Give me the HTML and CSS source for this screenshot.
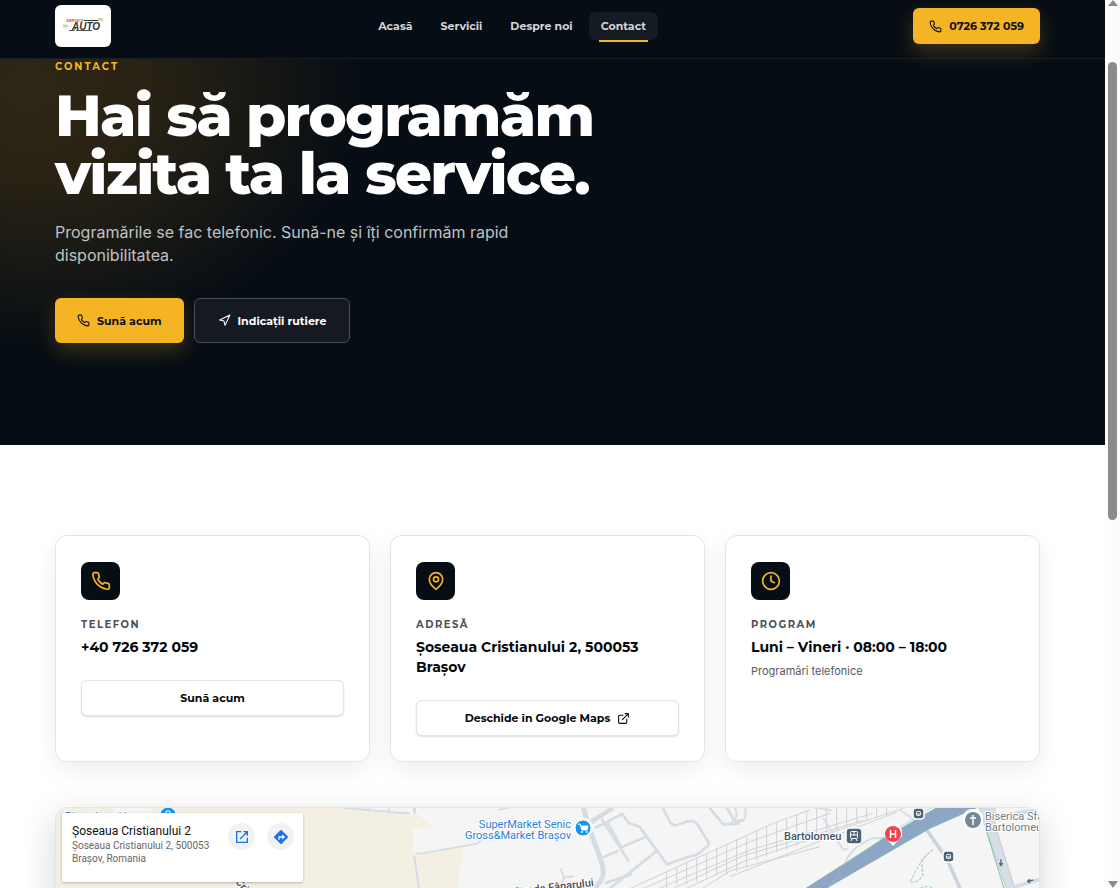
FILE: index.html
```html
<!DOCTYPE html>
<html lang="ro">
<head>
<meta charset="utf-8">
<meta name="viewport" content="width=device-width, initial-scale=1">
<title>Contact – Service Auto</title>
<link rel="stylesheet" href="styles.css">
</head>
<body>
<svg class="sprite" aria-hidden="true">
  <symbol id="phone" viewBox="0 0 24 24"><path d="M22 16.92v3a2 2 0 0 1-2.18 2 19.79 19.79 0 0 1-8.63-3.07 19.5 19.5 0 0 1-6-6 19.79 19.79 0 0 1-3.07-8.67A2 2 0 0 1 4.11 2h3a2 2 0 0 1 2 1.72 12.84 12.84 0 0 0 .7 2.81 2 2 0 0 1-.45 2.11L8.09 9.91a16 16 0 0 0 6 6l1.27-1.27a2 2 0 0 1 2.11-.45 12.84 12.84 0 0 0 2.81.7A2 2 0 0 1 22 16.92z"/></symbol>
  <symbol id="nav-arrow" viewBox="0 0 24 24"><path d="M3 11 22 2l-9 19-2-8z"/></symbol>
  <symbol id="pin" viewBox="0 0 24 24"><path d="M20 10c0 6-8 12-8 12s-8-6-8-12a8 8 0 0 1 16 0z"/><circle cx="12" cy="10" r="3"/></symbol>
  <symbol id="clock" viewBox="0 0 24 24"><circle cx="12" cy="12" r="10"/><path d="M12 6v6l4 2"/></symbol>
  <symbol id="external" viewBox="0 0 24 24"><path d="M15 3h6v6M10 14 21 3M18 13v6a2 2 0 0 1-2 2H5a2 2 0 0 1-2-2V8a2 2 0 0 1 2-2h6"/></symbol>
</svg>
<div class="window">
  <div class="page">
    <header class="header">
      <a class="logo" href="#" aria-label="Service Auto">
        <svg viewBox="0 0 56 42" aria-hidden="true">
          <text x="11" y="17" class="logo-top">SERVICE</text>
          <path d="M29 15.500h14" stroke="#333" stroke-width="1"/>
          <text x="17" y="25" class="logo-name">AUTO</text>
          <path d="M14 25.500h5l2-3M21 25.500h16" stroke="#555" stroke-width="1" fill="none"/>
          <path d="M8 21h5M43 14.500h5" stroke="#c4dca4" stroke-width="3"/>
        </svg>
      </a>
      <nav class="nav">
        <a href="#">Acasă</a>
        <a href="#">Servicii</a>
        <a href="#">Despre noi</a>
        <a href="#" class="active" aria-current="page">Contact</a>
      </nav>
      <a class="btn primary compact" href="#"><svg class="icon"><use href="#phone"/></svg>0726 372 059</a>
    </header>
    <section class="hero">
      <p class="eyebrow">Contact</p>
      <h1>Hai să programăm vizita ta la service.</h1>
      <p class="lead">Programările se fac telefonic. Sună-ne și îți confirmăm rapid disponibilitatea.</p>
      <div class="actions">
        <a class="btn primary" href="#"><svg class="icon"><use href="#phone"/></svg>Sună acum</a>
        <a class="btn ghost" href="#"><svg class="icon"><use href="#nav-arrow"/></svg>Indicații rutiere</a>
      </div>
    </section>
    <main class="content">
      <div class="cards">
        <article class="card">
          <span class="badge"><svg class="icon"><use href="#phone"/></svg></span>
          <h2>Telefon</h2>
          <p class="value">+40 726 372 059</p>
          <a class="btn outline" href="#">Sună acum</a>
        </article>
        <article class="card">
          <span class="badge"><svg class="icon"><use href="#pin"/></svg></span>
          <h2>Adresă</h2>
          <p class="value">Șoseaua Cristianului 2, 500053 Brașov</p>
          <a class="btn outline" href="#">Deschide în Google Maps<svg class="icon"><use href="#external"/></svg></a>
        </article>
        <article class="card">
          <span class="badge"><svg class="icon"><use href="#clock"/></svg></span>
          <h2>Program</h2>
          <p class="value">Luni – Vineri · 08:00 – 18:00</p>
          <p class="note">Programări telefonice</p>
        </article>
      </div>
      <section class="map" aria-label="Hartă">
        <svg class="map-canvas" viewBox="0 0 983 400" preserveAspectRatio="xMinYMin slice">
          <rect width="983" height="400" fill="#f5f5f5"/>
          <path d="M0 0h358v400H0z" fill="#f4efe3"/>
          <path d="M57 0h38v8H57zM282 0h76v9l-20-5-56-4z" fill="#f5f5f6"/>
          <path d="M358 3 376 18l-18 3v24l50-7-7 42h-43z" fill="#f4efe3"/>
          <path d="M358 21v23" stroke="#f5f5f5" stroke-width="2"/>
          <path d="M358 21h18l34 15-52 8z" fill="#f5f5f5"/>
          <g transform="translate(-16 -13) scale(.3333)" fill="none" stroke="#d3dbe3" stroke-width="5">
            <path d="M905 38 1110 56M985 38v8M1047 38v12M1122 38v20M1140 175h-10M1123 185l14 95"/>
          </g>
          <g transform="translate(344 -13) scale(.3333)" fill="none" stroke="#d4dce4" stroke-width="8" stroke-linejoin="round">
            <path d="M0 54h30M45 38v18M295 45l30-7M55 177l178-31 10-10M43 185l14 95" stroke-width="5"/>
            <path d="M550 38q15 55 35 110 25 60 25 85 0 20-25 45" stroke-width="15"/>
            <path d="M640 38 560 90" stroke-width="14"/>
            <path d="M585 98 620 82M605 72l82 128M610 187l45-20M622 80l45-23 20 28 32 10 20 28 62 85 62-22q30-3 50-25 17-10 12-20l-30-48q-8-18-30-14l-42 13q-8-4-15-14l-30-62M622 80l42 77 78-33M768 170 630 280M615 265l82-28M928 38l42 50 50-2M980 38l25 42 25-5"/>
            <path d="M482 220l10 28-8 18M492 248l28-4" stroke-width="6"/>
          </g>
          <g transform="translate(674 -13) scale(.3333)" fill="none" stroke-linejoin="round">
            <path d="M-310 285 130 85 240 45M-270 285 60 140 300 55M-225 285 60 165 430 55M-180 285 40 182 400 76M-140 285 40 200 520 40M-90 285 0 228 270 155M0 245 240 150 500 52" stroke="#cfd1d4" stroke-width="3"/>
            <path d="M-190 230v50M-160 215v55M-130 202v65M-100 190v70M-70 175v75M-40 160v80M-10 148v90M20 135v95M50 120v95M80 108v90M110 95v90M140 82v90M170 70v95M200 58v92M230 48v90M260 42v80M290 40v72M320 40v64M350 40v54M380 38v46M410 38v40M440 38v32M470 38v22" stroke="#cfd1d4" stroke-width="3"/>
            <path d="M0 85q30-15 15-45M15 78q40 10 30-40" stroke="#d4dce4" stroke-width="6"/>
            <path d="M280 70l60 95 14-5M510 45l70 48M255 38l50 8M345 208q10-45 80-78h60" stroke="#d8dee6" stroke-width="6"/>
            <path d="M582 93 650 190 690 280" stroke="#cbd4dd" stroke-width="11"/>
            <path d="M220 285 470 125 620 38H740L600 100 280 285z" fill="#8ea6c5" stroke="#7daaa4" stroke-width="2"/>
            <path d="M340 211 490 108 605 38M294 280l36-45" stroke="#8bd1b4" stroke-width="2"/>
            <path d="M748 38l12 40 70 205h25L795 90V38z" fill="#d6dee7" stroke="#c1ccd5" stroke-width="3"/>
            <path d="M770 110 822 280" stroke="#74c8a3" stroke-width="3"/>
            <path d="M930 253l-75 22M855 55l75-10" stroke="#d4dce4" stroke-width="11"/>
            <path d="M610 163q-35 20-70 100l26-5 12-16-3-45 32-33M570 280q25-10 40 0" stroke="#8bcdb0" stroke-width="3" stroke-dasharray="9 5"/>
            <path d="M813 193v18m-5-7 5 8 5-8M910 255l-16 4m5-6-6 6 7 4" stroke="#59636b" stroke-width="4"/>
          </g>
          <g class="poi-blue">
            <text x="9" y="12">Piața Auto Harman</text>
            <text x="515" y="20" text-anchor="end">SuperMarket Senic</text>
            <text x="515" y="31" text-anchor="end">Gross&amp;Market Brașov</text>
          </g>
          <circle cx="112" cy="7" r="8" fill="#1297f6" stroke="#fff" stroke-width="1"/>
          <path d="M110 6V3h4v3M109 6h6v5h-6z" fill="none" stroke="#fff"/>
          <g stroke="#fff" stroke-width="1">
            <path d="M519 24q-2-13 8-14 11 1 9 14l-9 8z" fill="#fff"/><circle cx="527" cy="20" r="8" fill="#1297f6"/>
            <path d="M522 16h2l2 6h5l1-4h-7" fill="#fff"/><circle cx="526" cy="24" r=".7"/><circle cx="531" cy="24" r=".7"/>
          </g>
          <text x="538" y="78" class="road" text-anchor="end" transform="rotate(-7 538 78)">Strada Fânarului</text>
          <text x="179" y="74" class="road" transform="rotate(50 179 74)">Cristianului</text>
          <text x="728" y="32" class="station">Bartolomeu</text>
          <g fill="#4b6477" stroke="#fff" stroke-width="1.500">
            <rect x="790" y="20" width="16" height="16" rx="4"/>
            <rect x="857" y="0" width="11" height="11" rx="3"/><rect x="887" y="43" width="11" height="11" rx="3"/>
          </g>
          <g fill="none" stroke="#fff">
            <rect x="794.500" y="23.500" width="7" height="7" rx="1"/><path d="M794 27h8M798 24v3M795 33l1-2M801 33l-1-2"/>
            <rect x="860.500" y="3.500" width="4" height="4" rx="1"/><path d="M860 6h5"/>
            <rect x="890.500" y="46.500" width="4" height="4" rx="1"/><path d="M890 49h5"/>
          </g>
          <path d="M828 28q-1-12 9-13 10 1 9 13l-9 10z" fill="#fff"/><circle cx="837" cy="26" r="8" fill="#f5424f"/>
          <path d="M834.500 22v8M839.500 22v8M834.500 26h5" stroke="#fff" stroke-width="1.500"/>
          <path d="M907 14q-1-13 10-13t10 13l-10 10z" fill="#fff"/><circle cx="917" cy="12" r="8" fill="#748995"/>
          <path d="M917 7v10M914 10h6" stroke="#fff" stroke-width="1.500"/>
          <g class="church"><text x="929" y="12">Biserica Sfântul</text><text x="929" y="23">Bartolomeu</text></g>
        </svg>
        <div class="place">
          <div class="place-text">
            <strong>Șoseaua Cristianului 2</strong>
            <span>Șoseaua Cristianului 2, 500053 Brașov, Romania</span>
          </div>
          <a class="round" href="#" aria-label="Deschide harta"><svg viewBox="0 0 24 24"><path d="M11 4H4v16h16v-7M14 4h6v6M20 4 9 15" fill="none" stroke="#1a73e8" stroke-width="2"/></svg></a>
          <a class="round" href="#" aria-label="Indicații"><svg viewBox="0 0 24 24"><path d="M11 2q1-1 2 0l9 9q1 1 0 2l-9 9q-1 1-2 0l-9-9q-1-1 0-2z" fill="#1a73e8"/><path d="M9 16v-4h6" fill="none" stroke="#fff" stroke-width="2"/><path d="m14 8 4 4-4 4z" fill="#fff"/></svg></a>
        </div>
      </section>
    </main>
  </div>
  <div class="scrollbar" aria-hidden="true">
    <span class="arrow up"></span><span class="thumb"></span><span class="arrow down"></span>
  </div>
</div>
</body>
</html>
```
FILE: styles.css
```css
:root {
  --ink: #070d14;
  --amber: #f4b423;
  --line: #e1e5e9;
  --display: "Montserrat", "Inter", sans-serif;
}
* { box-sizing: border-box; }
body { margin: 0; background: #fff; color: #05080c; font-family: "Inter", sans-serif; }
h1, h2, p { margin: 0; }
a { color: inherit; text-decoration: none; }
.sprite { position: absolute; width: 0; height: 0; }
.icon { width: 13px; height: 13px; flex: none; fill: none; stroke: currentColor; stroke-width: 2; stroke-linecap: round; stroke-linejoin: round; }

.window { display: grid; grid-template-columns: minmax(0, 1fr) 15px; height: 100vh; overflow: hidden; }
.page { overflow: hidden; }
.scrollbar { display: flex; flex-direction: column; align-items: center; justify-content: space-between; background: #fcfcfc; }
.thumb { width: 9px; height: 458px; margin: 56px 0 auto; border-radius: 5px; background: #8b8b8b; }
.arrow { border: 5px solid transparent; }
.up { border-top: 0; border-bottom: 6px solid #8b8b8b; }
.down { border-bottom: 0; border-top: 7px solid #8b8b8b; }

.header { position: relative; z-index: 1; display: flex; align-items: center; justify-content: space-between; padding: 5px 65px 11px 55px; background: var(--ink); border-bottom: 1px solid #171d23; }
.logo { width: 56px; height: 42px; border-radius: 6px; background: #fff; }
.logo svg { display: block; }
.logo-top { font: italic 700 4px "Liberation Sans", sans-serif; fill: #d94a50; }
.logo-name { font: italic 700 10px "Liberation Sans", sans-serif; fill: #333; }
.nav { display: flex; gap: 4px; }
.nav a { padding: 0 12px; border-radius: 7px; color: #d3d5d7; font: 700 11px/28px var(--display); }
.nav .active { position: relative; background: #151b22; }
.nav .active::after { content: ""; position: absolute; left: 10px; right: 10px; top: 100%; height: 2px; background: var(--amber); }

.btn { display: inline-flex; align-items: center; justify-content: center; gap: 7px; min-height: 45px; padding: 0 22px; border-radius: 6px; font: 700 11px/16px var(--display); }
.primary { background: var(--amber); color: #0b0f13; box-shadow: 0 8px 20px rgba(244, 180, 35, .22); }
.compact { min-height: 36px; padding: 0 16px; }
.ghost { padding: 0 23px; border: 1px solid #494e54; background: #151921; color: #fff; }
.outline { width: 100%; min-height: 36px; border: 1px solid var(--line); background: #fff; box-shadow: 0 1px 2px rgba(10, 20, 30, .14); }

.hero { padding: 0 65px 102px 55px; color: #fff; background: radial-gradient(ellipse 330px 260px at 30px 30px, #2e2615 0%, #292214 35%, #191914 65%, rgba(7, 13, 20, 0) 100%), var(--ink); }
.eyebrow { color: var(--amber); font: 700 10px/16px var(--display); letter-spacing: 2px; text-transform: uppercase; }
h1 { max-width: 600px; margin-top: 12px; font: 800 58px/58px var(--display); letter-spacing: -0.03em; }
.lead { max-width: 500px; margin-top: 18px; color: #bfc2c4; font-size: 16px; line-height: 23px; }
.actions { display: flex; gap: 10px; margin-top: 31px; }

.content { padding: 90px 65px 0 55px; }
.cards { display: grid; grid-template-columns: repeat(3, minmax(0, 1fr)); gap: 20px; }
.card { padding: 26px 25px 25px; border: 1px solid var(--line); border-radius: 12px; background: #fff; box-shadow: 0 8px 24px rgba(10, 20, 30, .07); }
.badge { display: flex; align-items: center; justify-content: center; width: 39px; height: 38px; border-radius: 8px; background: var(--ink); color: var(--amber); }
.badge .icon { width: 20px; height: 20px; }
h2 { margin-top: 18px; color: #4b5157; font: 700 10px/14px var(--display); letter-spacing: 0.15em; text-transform: uppercase; }
.value { margin-top: 5px; font: 700 14px/20px var(--display); }
.note { margin-top: 6px; color: #555b61; font-size: 11px; line-height: 16px; }
.card .btn { margin-top: 23px; }

.map { position: relative; margin-top: 45px; border: 1px solid var(--line); border-radius: 12px; overflow: hidden; box-shadow: 0 12px 36px rgba(10, 20, 30, .18); }
.map-canvas { display: block; width: 100%; height: 400px; font-family: "Roboto", sans-serif; font-size: 11px; }
.map-canvas text { paint-order: stroke; stroke: #fff; stroke-width: 2px; }
.poi-blue { fill: #2b7de0; }
.road { fill: #454d55; font-weight: 500; }
.station { fill: #3c5264; font-weight: 500; }
.church { fill: #6d7c87; }
.place { position: absolute; left: 6px; top: 5px; display: flex; align-items: flex-start; gap: 12px; width: 241px; min-height: 69px; padding: 10px 9px 16px 10px; border-radius: 2px; background: #fff; box-shadow: 0 1px 3px rgba(0, 0, 0, .25); }
.place-text { flex: 1; padding-top: 1px; }
.place-text strong { display: block; color: #111; font: 400 12px/15px "Roboto", sans-serif; }
.place-text span { display: block; color: #666; font: 400 10px/13px "Roboto", sans-serif; }
.round { display: flex; align-items: center; justify-content: center; flex: none; width: 27px; height: 27px; border-radius: 50%; background: #f2f2f3; }
.round svg { width: 16px; height: 16px; }
```
